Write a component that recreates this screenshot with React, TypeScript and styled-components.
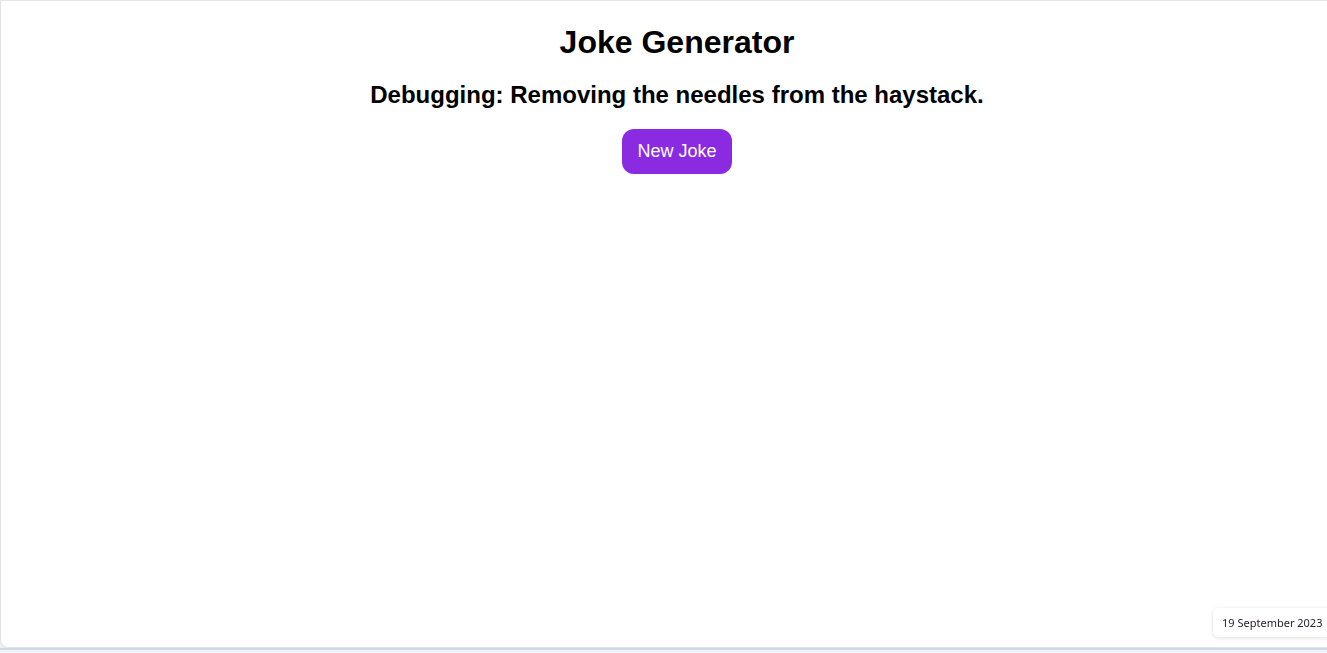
import React, { useState } from "react";
import styled, { createGlobalStyle } from "styled-components";

const GlobalStyle = createGlobalStyle`
  html, body {
    margin: 0;
    padding: 0;
    background: #eef2f7;
  }
  body {
    font-family: "Liberation Sans", Arial, sans-serif;
  }
`;

const Page = styled.div`
  width: 1327px;
  height: 653px;
  display: flex;
  flex-direction: column;
  overflow: hidden;
`;

const Frame = styled.div`
  box-sizing: border-box;
  width: 1354px;
  flex: none;
  height: 648px;
  background: #ffffff;
  border: 1px solid #e3e3e3;
  border-top-color: #e6e6e6;
  border-radius: 0 0 8px 8px;
  display: flex;
  flex-direction: column;
  align-items: center;
  box-shadow: 0 1px 1px rgba(0, 0, 0, 0.04);
`;

const Strip = styled.div`
  flex: 1;
  border-top: 2px solid #cfd9e8;
  background: #f1f4f8;
`;

const Title = styled.h1`
  margin: 23px 0 0;
  font-size: 32px;
  font-weight: 700;
  line-height: 37px;
  color: #000;
`;

const Joke = styled.h2`
  margin: 20px 0 0;
  font-size: 24px;
  font-weight: 700;
  line-height: 28px;
  color: #000;
`;

const Button = styled.button`
  margin-top: 20px;
  box-sizing: border-box;
  height: 45px;
  padding: 0 15px;
  border: none;
  border-radius: 12px;
  background: #8a2be2;
  color: #fff;
  font-family: "Liberation Sans", Arial, sans-serif;
  font-size: 18px;
  cursor: pointer;
`;

const DateBadge = styled.div`
  position: fixed;
  left: 1213px;
  top: 608px;
  height: 29px;
  padding: 0 10px 0 9px;
  display: flex;
  align-items: center;
  background: #fff;
  border-radius: 5px;
  box-shadow: 0 1px 4px rgba(0, 0, 0, 0.12);
  font-family: "Noto Sans", "Open Sans", sans-serif;
  font-size: 11px;
  color: #2a2030;
  white-space: nowrap;
`;

const jokes = [
  "Debugging: Removing the needles from the haystack.",
  "There are 10 kinds of people: those who understand binary and those who don't.",
  "A SQL query walks into a bar and asks two tables: can I join you?",
];

export default function App() {
  const [i, setI] = useState(0);
  return (
    <>
      <GlobalStyle />
      <Page>
        <Frame>
          <Title>Joke Generator</Title>
          <Joke>{jokes[i]}</Joke>
          <Button onClick={() => setI((i + 1) % jokes.length)}>New Joke</Button>
        </Frame>
        <Strip />
      </Page>
      <DateBadge>19 September 2023</DateBadge>
    </>
  );
}
